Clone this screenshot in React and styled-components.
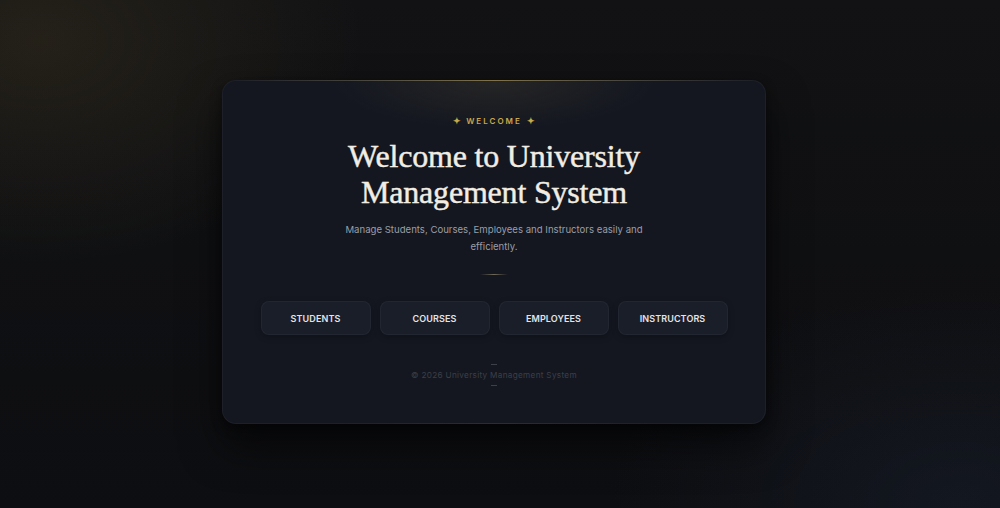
import React from "react";
import styled, { createGlobalStyle } from "styled-components";

const GlobalStyle = createGlobalStyle`
  * { box-sizing: border-box; }
  html, body { margin: 0; padding: 0; }
  body {
    background: #0e0f12;
    font-family: "Inter", "Liberation Sans", sans-serif;
  }
`;

const Page = styled.div`
  width: 100%;
  height: 508px;
  display: flex;
  align-items: flex-start;
  justify-content: center;
  padding-top: 80px;
  background:
    radial-gradient(ellipse 460px 320px at 40px 40px, rgba(150, 125, 60, 0.14), transparent 70%),
    radial-gradient(ellipse 500px 300px at 960px 500px, rgba(40, 55, 85, 0.22), transparent 70%),
    linear-gradient(180deg, #121214 0%, #0d0e11 100%);
`;

const Card = styled.div`
  position: relative;
  width: 544px;
  height: 344px;
  margin-right: 12px;
  border-radius: 14px;
  background:
    radial-gradient(ellipse 200px 60px at 50% 0%, rgba(70, 64, 48, 0.35), transparent 80%),
    #141720;
  border: 1px solid rgba(255, 255, 255, 0.04);
  box-shadow: 0 22px 40px rgba(0, 0, 0, 0.55), 0 4px 12px rgba(0, 0, 0, 0.4);
  display: flex;
  flex-direction: column;
  align-items: center;
  padding: 34px 36px 0;
  text-align: center;

  &::before {
    content: "";
    position: absolute;
    top: -1px;
    left: 0;
    right: 0;
    height: 1px;
    border-radius: 14px 14px 0 0;
    background: linear-gradient(90deg, transparent 2%, rgba(140, 130, 100, 0.45) 30%, rgba(170, 150, 90, 0.7) 50%, rgba(140, 130, 100, 0.45) 70%, transparent 98%);
  }
`;

const Eyebrow = styled.div`
  font-size: 8px;
  font-weight: 600;
  letter-spacing: 2px;
  color: #c9a84c;
  display: flex;
  align-items: center;
  gap: 5px;
  line-height: 12px;
`;

const Star = styled.span`
  font-size: 9px;
  letter-spacing: 0;
`;

const Title = styled.h1`
  margin: 11px 0 0;
  font-family: "Liberation Serif", "DejaVu Serif", serif;
  font-weight: 400;
  font-size: 32px;
  line-height: 36px;
  color: #f1ede4;
  letter-spacing: -0.2px;
  -webkit-text-stroke: 0.45px #f1ede4;
`;

const Subtitle = styled.p`
  margin: 11px 0 0;
  max-width: 305px;
  font-size: 9.6px;
  line-height: 17px;
  color: #9b9ea7;
`;

const Divider = styled.div`
  margin-top: 19px;
  width: 28px;
  height: 1px;
  background: linear-gradient(90deg, transparent, rgba(150, 140, 110, 0.7), transparent);
`;

const Actions = styled.div`
  margin-top: 26px;
  display: grid;
  grid-template-columns: repeat(4, 110px);
  gap: 9px;
`;

const NavButton = styled.button`
  height: 34px;
  border-radius: 8px;
  border: 1px solid rgba(255, 255, 255, 0.04);
  background: #1a1e28;
  color: #e3e4e8;
  font-family: "Inter", "Liberation Sans", sans-serif;
  font-size: 9px;
  font-weight: 600;
  letter-spacing: 0.1px;
  cursor: pointer;
  box-shadow: 0 2px 6px rgba(0, 0, 0, 0.25);
`;

const Footer = styled.div`
  margin-top: 29px;
  display: flex;
  flex-direction: column;
  align-items: center;
  gap: 5px;
`;

const Dash = styled.div`
  width: 6px;
  height: 1px;
  background: #3c404a;
`;

const FooterText = styled.div`
  font-size: 8.2px;
  letter-spacing: 0.3px;
  color: #3b3f49;
  line-height: 10px;
`;

const links = ["STUDENTS", "COURSES", "EMPLOYEES", "INSTRUCTORS"];

export default function App() {
  return (
    <>
      <GlobalStyle />
      <Page>
        <Card>
          <Eyebrow>
            <Star>✦</Star>WELCOME<Star>✦</Star>
          </Eyebrow>
          <Title>
            Welcome to University
            <br />
            Management System
          </Title>
          <Subtitle>
            Manage Students, Courses, Employees and Instructors easily and efficiently.
          </Subtitle>
          <Divider />
          <Actions>
            {links.map((l) => (
              <NavButton key={l}>{l}</NavButton>
            ))}
          </Actions>
          <Footer>
            <Dash />
            <FooterText>© 2026 University Management System</FooterText>
            <Dash />
          </Footer>
        </Card>
      </Page>
    </>
  );
}
